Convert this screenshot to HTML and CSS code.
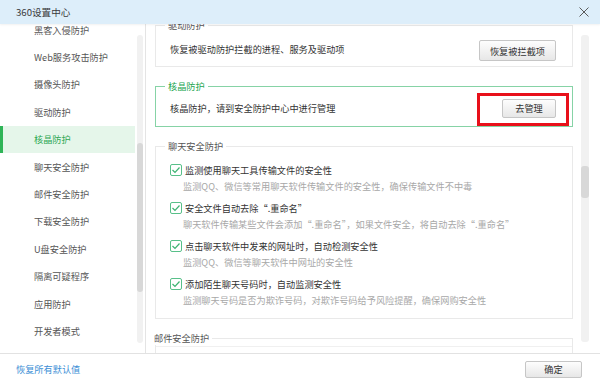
FILE: index.html
```html
<!DOCTYPE html>
<html lang="zh-CN">

<head>
    <meta charset="UTF-8">
    <meta name="viewport" content="width=device-width, initial-scale=1.0">
    <title>360设置中心</title>
    <link rel="stylesheet" href="styles.css">
</head>

<body>
    <div class="window">
        <div class="titlebar">
            <span class="title">360设置中心</span>
            <svg class="close" width="10" height="10" viewBox="0 0 10 10">
                <path d="M0.5 0.5 L9.5 9.5 M9.5 0.5 L0.5 9.5" stroke="#5a5a5a" stroke-width="1" fill="none" />
            </svg>
        </div>

        <div class="main">
            <div class="sidebar">
                <ul class="nav">
                    <li>黑客入侵防护</li>
                    <li>Web服务攻击防护</li>
                    <li>摄像头防护</li>
                    <li>驱动防护</li>
                    <li class="active">核晶防护</li>
                    <li>聊天安全防护</li>
                    <li>邮件安全防护</li>
                    <li>下载安全防护</li>
                    <li>U盘安全防护</li>
                    <li>隔离可疑程序</li>
                    <li>应用防护</li>
                    <li>开发者模式</li>
                </ul>
                <div class="track track-nav">
                    <div class="thumb"></div>
                </div>
            </div>

            <div class="content">
                <div class="panels">
                    <fieldset class="group group-first">
                        <legend>驱动防护</legend>
                        <div class="row">
                            <span>恢复被驱动防护拦截的进程、服务及驱动项</span>
                            <button class="btn btn-restore">恢复被拦截项</button>
                        </div>
                    </fieldset>

                    <fieldset class="group group-green">
                        <legend>核晶防护</legend>
                        <div class="row">
                            <span>核晶防护，请到安全防护中心中进行管理</span>
                            <button class="btn btn-manage">去管理<span class="mark"></span></button>
                        </div>
                    </fieldset>

                    <fieldset class="group group-list">
                        <legend>聊天安全防护</legend>
                        <div class="item">
                            <div class="check-line">
                                <span class="checkbox"><svg width="10" height="10" viewBox="0 0 10 10"><path d="M1.5 5 L4 7.5 L8.5 2.5" stroke="#3cb371" stroke-width="1.2" fill="none" /></svg></span>
                                <span class="label">监测使用聊天工具传输文件的安全性</span>
                            </div>
                            <div class="desc">监测QQ、微信等常用聊天软件传输文件的安全性，确保传输文件不中毒</div>
                        </div>
                        <div class="item">
                            <div class="check-line">
                                <span class="checkbox"><svg width="10" height="10" viewBox="0 0 10 10"><path d="M1.5 5 L4 7.5 L8.5 2.5" stroke="#3cb371" stroke-width="1.2" fill="none" /></svg></span>
                                <span class="label">安全文件自动去除“.重命名”</span>
                            </div>
                            <div class="desc">聊天软件传输某些文件会添加“.重命名”，如果文件安全，将自动去除“.重命名”</div>
                        </div>
                        <div class="item">
                            <div class="check-line">
                                <span class="checkbox"><svg width="10" height="10" viewBox="0 0 10 10"><path d="M1.5 5 L4 7.5 L8.5 2.5" stroke="#3cb371" stroke-width="1.2" fill="none" /></svg></span>
                                <span class="label">点击聊天软件中发来的网址时，自动检测安全性</span>
                            </div>
                            <div class="desc">监测QQ、微信等聊天软件中网址的安全性</div>
                        </div>
                        <div class="item">
                            <div class="check-line">
                                <span class="checkbox"><svg width="10" height="10" viewBox="0 0 10 10"><path d="M1.5 5 L4 7.5 L8.5 2.5" stroke="#3cb371" stroke-width="1.2" fill="none" /></svg></span>
                                <span class="label">添加陌生聊天号码时，自动监测安全性</span>
                            </div>
                            <div class="desc">监测聊天号码是否为欺诈号码，对欺诈号码给予风险提醒，确保网购安全性</div>
                        </div>
                    </fieldset>

                    <fieldset class="group group-list group-last">
                        <legend>邮件安全防护</legend>
                        <div class="inner-box"></div>
                    </fieldset>
                </div>
                <div class="track track-content">
                    <div class="thumb"></div>
                </div>
            </div>
        </div>

        <div class="footer">
            <a class="reset" href="#">恢复所有默认值</a>
            <button class="btn btn-ok">确定</button>
        </div>
    </div>
</body>

</html>
```

FILE: styles.css
```css
* {
    box-sizing: border-box;
}

body {
    margin: 0;
    font-family: "Noto Sans CJK SC", "Liberation Sans", sans-serif;
    font-size: 9.2px;
    color: #333;
    background-color: #fff;
}

.window {
    width: 600px;
    height: 384px;
    display: flex;
    flex-direction: column;
    overflow: hidden;
}

/* barre de titre */
.titlebar {
    height: 24px;
    flex: none;
    display: flex;
    align-items: center;
    justify-content: space-between;
    padding: 0 11px 0 16px;
    background-color: #ddeefa;
    box-shadow: 0 1px 2px rgba(0, 0, 0, 0.06);
    position: relative;
    z-index: 2;
}

.title {
    font-size: 9.6px;
    color: #3a3a3a;
}

.close {
    display: block;
}

.main {
    flex: 1;
    display: flex;
    min-height: 0;
}

/* menu de gauche */
.sidebar {
    width: 146px;
    flex: none;
    display: flex;
    border-right: 1px solid #e4e4e4;
    overflow: hidden;
}

.nav {
    list-style: none;
    margin: -8px 0 0 0;
    padding: 0;
    width: 135px;
    flex: none;
}

.nav li {
    height: 27.4px;
    display: flex;
    align-items: center;
    line-height: 12px;
    padding-left: 34px;
    color: #555;
    white-space: nowrap;
}

.nav li.active {
    background-color: #e5f6ea;
    color: #2ea854;
    box-shadow: inset 3px 0 0 #2fb457;
}

.track {
    flex: none;
    background-color: #f1f1f1;
    border-radius: 3px;
}

.track-nav {
    width: 6px;
    margin: 11px 0 10px 2px;
}

.track-nav .thumb {
    margin-top: 108px;
    height: 149px;
}

.thumb {
    background-color: #d8d8d8;
    border-radius: 3px;
}

/* contenu */
.content {
    flex: 1;
    display: flex;
    min-width: 0;
}

.panels {
    flex: 1;
    margin-top: -6px;
    padding: 0 8px 0 9px;
    overflow: hidden;
}

.group {
    margin: 0 0 12px 0;
    min-width: 0;
    padding: 0 16px 3px 14px;
    border: 1px solid #e9e9e9;
}

.group-first {
    padding-top: 2px;
    padding-bottom: 2px;
}

.group legend {
    margin-left: -5px;
    padding: 0 3px;
    line-height: 14px;
    color: #555;
}

.group-green {
    border-color: #86d3a6;
}

.group-green legend {
    color: #25a650;
}

.row {
    height: 30px;
    display: flex;
    align-items: center;
    justify-content: space-between;
}

.btn {
    font-family: inherit;
    font-size: 9.2px;
    color: #333;
    padding: 0;
    border: 1px solid #c6c6c6;
    border-radius: 2px;
    background: linear-gradient(#fdfdfd, #e7e7e7);
}

.btn-restore {
    width: 77px;
    height: 21px;
    margin-top: 3px;
}

.btn-manage {
    width: 54px;
    height: 19px;
    position: relative;
}

/* cadre rouge d'annotation */
.mark {
    position: absolute;
    top: -7px;
    bottom: -9px;
    left: -26px;
    right: -14px;
    border: 3px solid #e8101a;
}

.group-list {
    padding: 9px 16px 10px 14px;
}

.group-last {
    padding: 1px 0 0 0;
    border-bottom: none;
}

.inner-box {
    height: 40px;
    border-top: 1px solid #f0f0f0;
}

.item {
    margin-bottom: 6px;
}

.item:last-child {
    margin-bottom: 0;
}

.check-line {
    display: flex;
    align-items: center;
    height: 16px;
}

.checkbox {
    width: 12px;
    height: 12px;
    flex: none;
    display: flex;
    align-items: center;
    justify-content: center;
    border: 1px solid #58c089;
    border-radius: 2px;
    margin-right: 3px;
}

.checkbox svg {
    display: block;
}

.label {
    color: #333;
}

.desc {
    height: 16px;
    line-height: 16px;
    padding-left: 13px;
    color: #a8a8a8;
    white-space: nowrap;
}

.track-content {
    width: 8px;
    margin: 11px 11px 11px 0;
}

.track-content .thumb {
    margin-top: 131px;
    height: 32px;
}

/* pied de page */
.footer {
    height: 31px;
    flex: none;
    display: flex;
    align-items: center;
    justify-content: space-between;
    padding: 0 18px 0 16px;
    border-top: 1px solid #e2e2e2;
}

.reset {
    color: #3d8fd6;
    text-decoration: none;
}

.btn-ok {
    width: 57px;
    height: 17px;
}
```
